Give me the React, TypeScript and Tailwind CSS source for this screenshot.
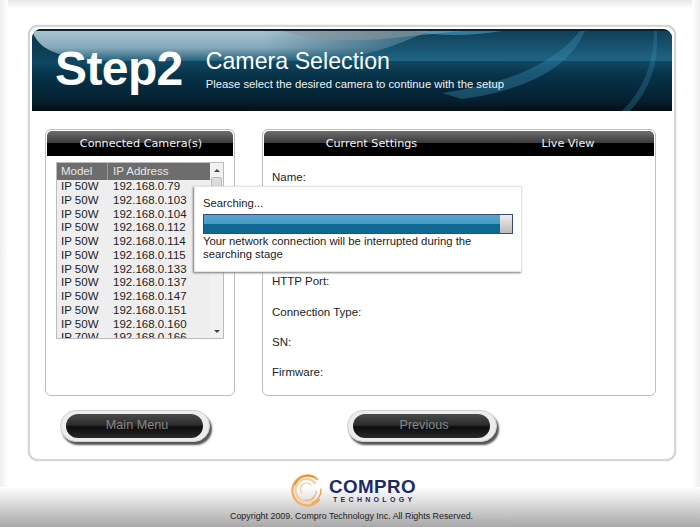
const SANS = "font-['Liberation_Sans',Arial,sans-serif]";

const cameras = [
  ["IP 50W", "192.168.0.79"],
  ["IP 50W", "192.168.0.103"],
  ["IP 50W", "192.168.0.104"],
  ["IP 50W", "192.168.0.112"],
  ["IP 50W", "192.168.0.114"],
  ["IP 50W", "192.168.0.115"],
  ["IP 50W", "192.168.0.133"],
  ["IP 50W", "192.168.0.137"],
  ["IP 50W", "192.168.0.147"],
  ["IP 50W", "192.168.0.151"],
  ["IP 50W", "192.168.0.160"],
  ["IP 70W", "192.168.0.166"],
];

const HeaderArt = () => (
  <svg className="absolute inset-0 h-full w-full" viewBox="0 0 640 82" preserveAspectRatio="none">
    <defs>
      <linearGradient id="base" x1="0" y1="0" x2="0" y2="1">
        <stop offset="0" stopColor="#0c3346" />
        <stop offset="0.42" stopColor="#0f4660" />
        <stop offset="0.56" stopColor="#07334a" />
        <stop offset="0.88" stopColor="#04202e" />
        <stop offset="1" stopColor="#050f15" />
      </linearGradient>
      <linearGradient id="gloss" x1="0" y1="0" x2="0" y2="1">
        <stop offset="0" stopColor="#a9c3cf" />
        <stop offset="0.55" stopColor="#86aabb" />
        <stop offset="1" stopColor="#24617c" />
      </linearGradient>
      <linearGradient id="glossFade" x1="0" y1="0" x2="1" y2="0">
        <stop offset="0" stopColor="#1b5570" stopOpacity="0" />
        <stop offset="1" stopColor="#1b5570" stopOpacity="0.85" />
      </linearGradient>
      <linearGradient id="rightTop" x1="0" y1="0" x2="0" y2="1">
        <stop offset="0" stopColor="#0f4058" />
        <stop offset="1" stopColor="#1f6584" />
      </linearGradient>
      <clipPath id="glossClip">
        <path d="M0 2 H395 Q350 24 300 32 H70 Q30 30 12 18 Q4 12 0 2 Z" />
      </clipPath>
    </defs>
    <rect width="640" height="82" fill="url(#base)" />
    <path d="M300 2 H640 V32 H300 Z" fill="url(#rightTop)" />
    <path d="M0 2 H395 Q350 24 300 32 H70 Q30 30 12 18 Q4 12 0 2 Z" fill="url(#gloss)" />
    <rect x="230" y="2" width="170" height="32" fill="url(#glossFade)" clipPath="url(#glossClip)" />
    <path d="M250 2 Q300 16 360 9 Q400 5 430 2 Z" fill="#8d9499" opacity="0.6" />
    <path d="M380 2 Q420 10 470 2 Z" fill="#55b4dc" opacity="0.5" />
    <path d="M410 64 Q510 50 548 2 L553 2 Q530 56 430 70 Z" fill="#3a8db2" opacity="0.4" />
    <path d="M590 82 Q622 50 622 2 L625 2 Q628 50 598 82 Z" fill="#3a8db2" opacity="0.3" />
    <rect width="640" height="2" fill="#082433" />
  </svg>
);

const PanelHeader = ({ children }: { children: React.ReactNode }) => (
  <div className="flex h-[25px] rounded-t-[5px] bg-[linear-gradient(#6e6e6e_0%,#3a3a3a_48%,#000_50%,#000_100%)] font-['DejaVu_Sans',sans-serif] text-[11.2px] leading-[25px] text-[#f2f2f2]">
    {children}
  </div>
);

const PillButton = ({ label, className }: { label: string; className: string }) => (
  <div className={`flex h-[32px] w-[150px] items-center rounded-full border border-[#d0d0d0] bg-[#ececec] pl-[5px] pr-[6px] shadow-[2px_3px_2px_#555] ${className}`}>
    <div className={`h-[24px] w-full rounded-full bg-[linear-gradient(#4a4a4a_0%,#2c2c2c_45%,#0c0c0c_55%,#2a2a2a_100%)] pl-[5px] text-center ${SANS} text-[12.6px] leading-[22px] text-[#868686]`}>
      {label}
    </div>
  </div>
);

const Field = ({ label, className }: { label: string; className: string }) => (
  <div className={`${className} text-[11.5px] leading-[14px] text-[#222]`}>{label}</div>
);

const Logo = () => (
  <svg width="34" height="34" viewBox="0 0 34 34" fill="none" strokeLinecap="round">
    <path d="M27 6 A15 15 0 1 0 29 27" stroke="#f3b060" strokeWidth="2.4" />
    <path d="M24 4 A14 14 0 0 0 5 12" stroke="#e8922c" strokeWidth="1.6" />
    <path d="M25 10 A11 11 0 1 0 24 25" stroke="#f7cd9c" strokeWidth="2" />
    <path d="M31 16 A14 14 0 0 1 22 30" stroke="#eca04a" strokeWidth="1.3" />
    <path d="M26 18 A9 9 0 0 1 15 27" stroke="#f2b36a" strokeWidth="1.2" />
    <path d="M12 20 A6 6 0 0 1 21 12" stroke="#f4c48a" strokeWidth="1.1" />
  </svg>
);

export default function App() {
  return (
    <div className={`relative h-[527px] w-[700px] overflow-hidden bg-white ${SANS}`}>
      <div className="absolute inset-x-0 bottom-0 h-[40px] bg-[linear-gradient(#fff,#a8a8a8)]" />
      <div className="absolute inset-x-0 top-0 h-[9px] bg-[linear-gradient(#e6e8ea,#fff)]" />
      <div className="absolute bottom-[40px] left-0 top-0 w-[8px] bg-[linear-gradient(90deg,#eceef0,#fff)]" />
      <div className="absolute bottom-[40px] right-0 top-0 w-[8px] bg-[linear-gradient(270deg,#eceef0,#fff)]" />

      <div className="relative flex flex-col pl-[28px] pt-[25px]">
        <div className="h-[436px] w-[648px] rounded-[10px] border-2 border-[#d8d6d2] bg-white p-[2px] shadow-[0_0_1px_#999]">
          <div className="relative h-[82px] overflow-hidden rounded-t-[9px]">
            <HeaderArt />
            <div className="relative flex items-start pl-[23px] text-white">
              <div className="pt-[12px] text-[48px] font-bold leading-[56px] tracking-[-0.6px]">Step2</div>
              <div className="pl-[23px] pt-[18px]">
                <div className="text-[23.2px] leading-[28px]">Camera Selection</div>
                <div className="pt-[2px] text-[11.3px] leading-[14px] text-[#eef3f5]">
                  Please select the desired camera to continue with the setup
                </div>
              </div>
            </div>
          </div>

          <div className="flex gap-[27px] pl-[13px] pt-[18px]">
            <div className="h-[267px] w-[190px] rounded-[6px] border border-[#bdbdbd] px-[1px] pt-[1px]">
              <PanelHeader>
                <div className="w-full pl-[2px] text-center">Connected Camera(s)</div>
              </PanelHeader>
              <div className="ml-[9px] mt-[6px] flex h-[177px] w-[168px] overflow-hidden border border-[#bbb] bg-[#eeeeee]">
                <div className="w-[154px] overflow-hidden text-[11.5px] text-[#222]">
                  <div className="flex h-[17px] bg-[#6d6d6d] leading-[17px] text-[#e8e8e8]">
                    <div className="w-[51px] border-r border-[#999] pl-[4px]">Model</div>
                    <div className="pl-[5px]">IP Address</div>
                  </div>
                  {cameras.map(([model, ip]) => (
                    <div key={ip} className="flex h-[13.75px] leading-[13.75px]">
                      <div className="w-[52px] pl-[4px]">{model}</div>
                      <div className="pl-[4px]">{ip}</div>
                    </div>
                  ))}
                </div>
                <div className="flex w-[13px] flex-col items-center bg-[#f1f1f1]">
                  <div className="mt-[6px] h-0 w-0 border-x-[3px] border-b-[3px] border-x-transparent border-b-[#444]" />
                  <div className="mt-[5px] h-[20px] w-[11px] rounded-[2px] border border-[#bbb] bg-[#dcdcdc]" />
                  <div className="mb-[5px] mt-auto h-0 w-0 border-x-[3px] border-t-[3px] border-x-transparent border-t-[#444]" />
                </div>
              </div>
            </div>

            <div className="h-[267px] w-[394px] rounded-[6px] border border-[#bdbdbd] px-[1px] pt-[1px]">
              <PanelHeader>
                <div className="w-[214px] pl-[2px] text-center">Current Settings</div>
                <div className="w-[178px] pl-[5px] text-center">Live View</div>
              </PanelHeader>
              <div className="pl-[8px]">
                <Field label="Name:" className="pt-[14px]" />
                <Field label="HTTP Port:" className="pt-[90px]" />
                <Field label="Connection Type:" className="pt-[17px]" />
                <Field label="SN:" className="pt-[16px]" />
                <Field label="Firmware:" className="pt-[16px]" />
              </div>
            </div>
          </div>

          <div className="flex pl-[28px] pt-[14px]">
            <PillButton label="Main Menu" className="" />
            <PillButton label="Previous" className="ml-[137px]" />
          </div>
        </div>

        <div className="ml-[262px] mt-[12px] flex h-[34px] items-center">
          <Logo />
          <div className="ml-[5px] mt-[2px] flex flex-col">
            <div className="text-[18.8px] font-bold leading-[14px] tracking-[0.4px] text-[#1b2a6b]">COMPRO</div>
            <div className="pl-[4px] pt-[2px] text-[7px] font-bold leading-[7px] tracking-[3.3px] text-[#1b2a6b]">TECHNOLOGY</div>
          </div>
        </div>
        <div className="ml-[202px] mt-[3px] text-[8.9px] leading-[12px] text-[#222]">
          Copyright 2009. Compro Technology Inc. All Rights Reserved.
        </div>
      </div>

      <div className="absolute left-[194px] top-[186px] h-[86px] w-[328px] border border-[#e4e4e4] bg-white pl-[8px] pt-[9px] text-[11.3px] leading-[14px] text-[#222] shadow-[-1px_1px_2px_#777]">
        <div>Searching...</div>
        <div className="mt-[4px] h-[20px] w-[310px] border border-[#3a4a78] bg-[linear-gradient(#eee,#bbb)]">
          <div className="h-full w-[296px] bg-[linear-gradient(#55a6cf_0%,#4a9ac4_48%,#0f6793_52%,#0f6793_100%)]" />
        </div>
        <div className="mt-[1px] leading-[13px]">
          Your network connection will be interrupted during the
          <br />
          searching stage
        </div>
      </div>
    </div>
  );
}
